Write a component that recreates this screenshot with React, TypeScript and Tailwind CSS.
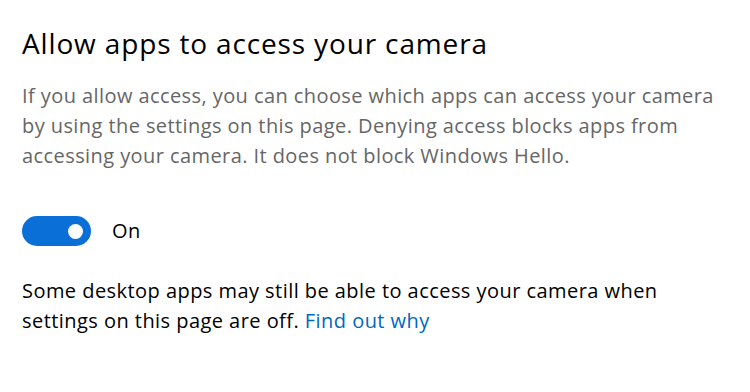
export default function App() {
  return (
    <div className="w-[750px] h-[392px] bg-white pl-[22px] pt-[26px] overflow-hidden" style={{ fontFamily: '"Open Sans", sans-serif' }}>
      <h1 className="text-[28px] leading-[34px] text-black font-normal tracking-[0.85px]">Allow apps to access your camera</h1>
      <p className="mt-[21px] text-[20px] leading-[30px] text-[#666666] tracking-[0.42px]">
        If you allow access, you can choose which apps can access your camera<br />
        by using the settings on this page. Denying access blocks apps from<br />
        accessing your camera. It does not block Windows Hello.
      </p>
      <div className="mt-[45px] flex items-center gap-[21px]">
        <div className="w-[69px] h-[30px] rounded-full bg-[#0a6fd6] flex items-center justify-end pr-[8px]">
          <div className="w-[15px] h-[15px] rounded-full bg-white" />
        </div>
        <span className="text-[20px] text-black tracking-[0.42px]">On</span>
      </div>
      <p className="mt-[30px] text-[20px] leading-[30px] text-black tracking-[0.45px]">
        Some desktop apps may still be able to access your camera when<br />
        settings on this page are off. <span className="text-[#0067c0]">Find out why</span>
      </p>
    </div>
  );
}
